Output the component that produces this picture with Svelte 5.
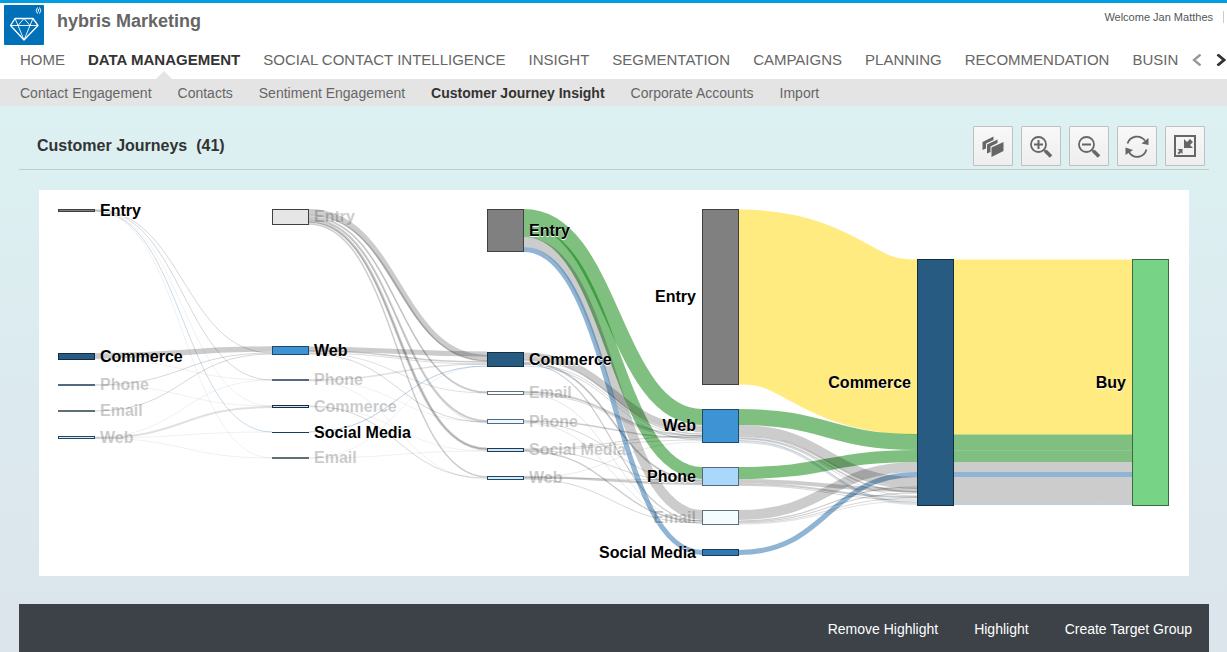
<script>
  const tabs = [
    'HOME', 'DATA MANAGEMENT', 'SOCIAL CONTACT INTELLIGENCE', 'INSIGHT', 'SEGMENTATION',
    'CAMPAIGNS', 'PLANNING', 'RECOMMENDATION', 'BUSIN'
  ];
  const activeTab = 'DATA MANAGEMENT';

  const views = [
    'Contact Engagement', 'Contacts', 'Sentiment Engagement', 'Customer Journey Insight',
    'Corporate Accounts', 'Import'
  ];
  const activeView = 'Customer Journey Insight';

  const footerActions = ['Remove Highlight', 'Highlight', 'Create Target Group'];

  const nodeWidth = 37;
  const columns = [19, 233, 448, 663, 878, 1093];

  // [column, top, height, label, fill, stroke, dimmed]
  const nodes = [
    [0, 19, 3, 'Entry', '#808080', '#404040', false],
    [0, 163, 7, 'Commerce', '#275b82', '#142e41', false],
    [0, 194, 2, 'Phone', '#52697f', '#52697f', true],
    [0, 220, 2, 'Email', '#5f7077', '#5f7077', true],
    [0, 246, 3, 'Web', '#d8e9f6', '#1e4969', true],
    [1, 19, 16, 'Entry', '#e6e6e6', '#404040', true],
    [1, 156, 9, 'Web', '#3d93d3', '#1e4969', false],
    [1, 189, 2, 'Phone', '#52697f', '#52697f', true],
    [1, 215, 3, 'Commerce', '#d4dee6', '#142e51', true],
    [1, 242, 1, 'Social Media', '#183c59', '#183c59', false],
    [1, 267, 2, 'Email', '#5f7077', '#5f7077', true],
    [2, 19, 43, 'Entry', '#808080', '#404040', false],
    [2, 162, 15, 'Commerce', '#275b82', '#142e41', false],
    [2, 201, 4, 'Email', '#fcfeff', '#5f7077', true],
    [2, 229, 5, 'Phone', '#eef7ff', '#52697f', true],
    [2, 258, 4, 'Social Media', '#d6e4ef', '#183c59', true],
    [2, 286, 4, 'Web', '#d8e9f6', '#1e4969', true],
    [3, 19, 176, 'Entry', '#808080', '#404040', false],
    [3, 219, 34, 'Web', '#3d93d3', '#1e4969', false],
    [3, 277, 19, 'Phone', '#a9d8fb', '#52697f', false],
    [3, 320, 15, 'Email', '#f4fcff', '#5f7077', true],
    [3, 359, 7, 'Social Media', '#3079b3', '#183c59', false],
    [4, 69, 247, 'Commerce', '#275b82', '#142e41', false],
    [5, 69, 247, 'Buy', '#77d487', '#3b6a43', false]
  ].map(([column, y, height, label, fill, stroke, dim]) => ({
    x: columns[column], y, height, label, fill, stroke, dim, before: column > 2
  }));

  const inks = {
    grey: ['#000', 0.2],
    faint: ['#000', 0.12],
    green: ['#008000', 0.5],
    blue: ['#2269a9', 0.5],
    paleblue: ['#2269a9', 0.3],
    gold: ['#ffd700', 0.5]
  };

  // [source column, source y, target y, thickness, ink]
  const links = [
    [0, 20, 163, 0.8, 'grey'], [0, 20, 190, 0.8, 'grey'], [0, 21, 216, 0.5, 'faint'],
    [0, 21, 242, 0.8, 'paleblue'], [0, 21, 268, 0.5, 'faint'],
    [0, 166, 159, 5.5, 'grey'], [0, 169, 190, 0.5, 'faint'],
    [0, 195, 163, 0.8, 'grey'], [0, 195, 216, 0.5, 'faint'],
    [0, 221, 164, 0.8, 'grey'],
    [0, 247, 190, 0.5, 'faint'], [0, 248, 217, 2, 'faint'],
    [0, 248, 242, 0.5, 'faint'], [0, 248, 268, 0.5, 'faint'],

    [1, 22, 168, 6, 'grey'], [1, 25.5, 171, 1.5, 'grey'],
    [1, 27, 202, 1.5, 'grey'], [1, 28, 203, 0.5, 'grey'],
    [1, 29, 231, 2, 'grey'], [1, 30, 233, 0.5, 'grey'],
    [1, 31.5, 259, 3, 'grey'], [1, 32, 259, 1, 'grey'],
    [1, 34, 287, 1.5, 'grey'],
    [1, 159, 164, 5, 'grey'], [1, 161, 172, 1.5, 'grey'], [1, 163, 174, 0.7, 'grey'],
    [1, 163, 203, 1, 'faint'], [1, 164, 232, 0.8, 'grey'],
    [1, 190, 174, 1.5, 'faint'], [1, 190, 232, 0.5, 'faint'], [1, 191, 289, 0.5, 'faint'],
    [1, 216, 288, 0.8, 'grey'], [1, 217, 261, 0.5, 'faint'],
    [1, 242, 176, 1, 'paleblue'],
    [1, 268, 176, 0.5, 'faint'], [1, 268, 261, 0.5, 'faint'],

    [2, 27, 227, 16, 'green'], [2, 41, 283, 12, 'green'],
    [2, 52, 325, 10, 'grey'], [2, 59.5, 362.5, 5, 'blue'],
    [2, 166, 239, 7, 'grey'], [2, 170, 244, 1.5, 'grey'], [2, 173, 291, 1.5, 'grey'],
    [2, 174, 331, 1.2, 'grey'], [2, 174, 246, 0.8, 'grey'], [2, 176, 250, 0.8, 'paleblue'],
    [2, 172, 290, 0.8, 'grey'],
    [2, 202, 246, 2, 'grey'], [2, 204, 248, 0.8, 'grey'], [2, 204, 333, 0.5, 'grey'],
    [2, 231, 248, 1.5, 'grey'], [2, 232, 292, 0.8, 'grey'], [2, 233, 333, 0.5, 'grey'],
    [2, 259, 246, 0.8, 'grey'], [2, 260, 293, 0.8, 'grey'], [2, 261, 331, 1.5, 'grey'],
    [2, 260, 250, 0.7, 'grey'],
    [2, 287, 294, 2.5, 'grey'], [2, 288, 252, 0.7, 'faint'], [2, 289, 333, 0.8, 'grey'],
    [2, 288, 290, 1, 'faint'],

    [3, 107, 157, 175, 'gold'],
    [3, 227, 252, 16, 'green'], [3, 283, 266, 12, 'green'],
    [3, 325, 277, 10, 'grey'], [3, 362.5, 284.5, 5, 'blue'],
    [3, 240, 292, 10, 'grey'], [3, 246, 298, 2, 'grey'], [3, 248, 302, 1.5, 'grey'],
    [3, 250.5, 312.5, 1, 'paleblue'], [3, 252, 314, 2, 'faint'], [3, 249, 306, 0.8, 'grey'],
    [3, 291, 300, 4, 'grey'], [3, 294, 307, 2, 'grey'], [3, 295.5, 310, 0.8, 'grey'],
    [3, 331, 297, 1.2, 'grey'], [3, 332, 303, 1, 'grey'],
    [3, 333, 308, 0.8, 'grey'], [3, 334, 311, 0.6, 'grey'],

    [4, 157, 157, 175, 'gold'],
    [4, 252.5, 252.5, 16, 'green'], [4, 266.25, 266.25, 11.5, 'green'],
    [4, 277, 277, 10, 'grey'], [4, 284.5, 284.5, 5, 'blue'],
    [4, 297.5, 297.5, 21, 'grey'], [4, 310, 310, 4, 'grey'],
    [4, 312.5, 312.5, 1, 'paleblue'], [4, 314, 314, 2, 'grey']
  ].map(([column, y0, y1, thickness, ink]) => {
    const x0 = columns[column] + nodeWidth;
    const x1 = columns[column + 1];
    const mid = (x0 + x1) / 2;
    return {
      d: `M${x0},${y0}C${mid},${y0} ${mid},${y1} ${x1},${y1}`,
      thickness,
      color: inks[ink][0],
      opacity: inks[ink][1]
    };
  });
</script>

<div class="page">
  <header>
    <div class="brand">
      <svg class="logo" viewBox="0 0 40 40" aria-hidden="true">
        <rect width="40" height="40" rx="1" fill="#0070b9" />
        <g fill="none" stroke="#fff" stroke-width="1.3" stroke-linejoin="round">
          <path d="M11 13.5H29L34 20.5L20 35L6.5 20.5Z" />
          <path d="M6.5 20.5H34M14 20.5L20 35L26 20.5M11 13.5L14 20.5L20 13.5L26 20.5L29 13.5" stroke-width="0.9" />
          <path d="M33.5 2.5Q31 5.500 33.5 8.5" stroke-width="1" />
          <path d="M35.500 2.500Q38 5.500 35.500 8.500" stroke-width="1" />
          <path d="M34.500 4V6.500" stroke-width="1" />
        </g>
      </svg>
      <h1>hybris Marketing</h1>
      <span class="welcome">Welcome Jan Matthes</span>
    </div>
    <div class="tabbar">
      <nav class="tabs" aria-label="Areas">
        {#each tabs as tab}
          <a href="#area" class:active={tab === activeTab}>{tab}</a>
        {/each}
      </nav>
      <button class="scroll" disabled aria-label="Scroll left">
        <svg width="10" height="12" viewBox="0 0 10 12"><path d="M8.5 0.5L2 6L8.5 11.5" fill="none" stroke="#999" stroke-width="2.4" /></svg>
      </button>
      <button class="scroll" aria-label="Scroll right">
        <svg width="10" height="12" viewBox="0 0 10 12"><path d="M1.5 0.5L8 6L1.5 11.5" fill="none" stroke="#333" stroke-width="2.8" /></svg>
      </button>
    </div>
  </header>

  <nav class="views" aria-label="Views">
    {#each views as view}
      <a href="#view" class:active={view === activeView}>{view}</a>
    {/each}
  </nav>

  <main>
    <div class="heading">
      <h2>Customer Journeys&nbsp; (41)</h2>
      <div class="tools">
        <button aria-label="Layers">
          <svg viewBox="0 0 24 24" fill="#666">
            <path d="M1.5 8L12.5 2.5V6L5 9.500V14.500L1.5 16Z" />
            <path d="M6 10.5L16.5 5.5V9L9.5 12.5V18L6 19.5Z" />
            <path d="M10.5 13.5L22.500 8V17L10.500 23Z" />
          </svg>
        </button>
        <button aria-label="Zoom in">
          <svg viewBox="0 0 24 24" fill="none" stroke="#666">
            <circle cx="9.500" cy="10.500" r="7.500" stroke-width="1.8" />
            <path d="M5 10.500H14M9.500 6V15" stroke-width="2" />
            <path d="M15 16L17 18" stroke-width="2" />
            <path d="M16.500 17L22 22.500" stroke-width="3.6" />
          </svg>
        </button>
        <button aria-label="Zoom out">
          <svg viewBox="0 0 24 24" fill="none" stroke="#666">
            <circle cx="9.500" cy="10.500" r="7.500" stroke-width="1.8" />
            <path d="M5 10.500H14" stroke-width="2" />
            <path d="M15 16L17 18" stroke-width="2" />
            <path d="M16.500 17L22 22.500" stroke-width="3.6" />
          </svg>
        </button>
        <button aria-label="Refresh">
          <svg viewBox="0 0 24 24">
            <path d="M2.500 9.500C5 2 14.500 0 20 6.500M21.500 15.500C19 24 8.500 25.500 4 18" fill="none" stroke="#666" stroke-width="1.8" />
            <path d="M23.500 4V11L16.500 9.500ZM0.500 13.500L8 16L0.500 21Z" fill="#666" />
          </svg>
        </button>
        <button aria-label="Exit full screen">
          <svg viewBox="0 0 24 24">
            <rect x="2" y="2" width="20" height="20" fill="none" stroke="#666" stroke-width="2" />
            <path d="M11 5V14H20L17 11L20 8L17 5L14 8ZM4.500 15H9.500V20L8 18.500L6 20.500L4.500 19L6.500 17Z" fill="#666" />
          </svg>
        </button>
      </div>
    </div>

    <svg class="chart" viewBox="0 0 1150 386" role="img" aria-label="Customer journeys">
      <g fill="none">
        {#each links as link}
          <path d={link.d} stroke={link.color} stroke-opacity={link.opacity} stroke-width={link.thickness} />
        {/each}
      </g>
      {#each nodes as node}
        <rect x={node.x} y={node.y} width={nodeWidth} height={node.height} fill={node.stroke} />
        {#if node.height > 2}
          <rect x={node.x + 1} y={node.y + 1} width={nodeWidth - 2} height={node.height - 2} fill={node.fill} />
        {/if}
      {/each}
      {#each nodes as node}
        <text
          class:dim={node.dim}
          x={node.before ? node.x - 6 : node.x + nodeWidth + 5}
          y={Math.round(node.y + node.height / 2 + 5)}
          text-anchor={node.before ? 'end' : 'start'}>{node.label}</text>
      {/each}
    </svg>

    <footer>
      {#each footerActions as action}
        <button>{action}</button>
      {/each}
    </footer>
  </main>
</div>

<style>
  :global(body) {
    margin: 0;
    font-family: "Liberation Sans", Arial, sans-serif;
  }

  .page {
    display: flex;
    flex-direction: column;
    min-height: 100vh;
    box-sizing: border-box;
    background: linear-gradient(#dcf1f2 106px, #dce4ec);
  }

  button {
    padding: 0;
    border: 0;
    background: none;
    font: inherit;
    cursor: pointer;
  }

  a {
    color: inherit;
    text-decoration: none;
  }

  header {
    border-top: 3px solid #009de0;
    background: #fff;
  }

  .brand {
    display: flex;
    align-items: flex-start;
    gap: 13px;
    height: 42px;
    padding: 2px 3px 0 4px;
    box-sizing: border-box;
  }

  .logo {
    flex: none;
    width: 40px;
    height: 40px;
  }

  h1 {
    flex: 1;
    margin: 5px 0 0;
    color: #666;
    font-size: 18px;
    line-height: 22px;
  }

  .welcome {
    margin-top: 6px;
    padding-right: 10px;
    border-right: 1px solid #ccc;
    color: #555;
    font-size: 11px;
    line-height: 12px;
  }

  .tabbar {
    display: flex;
    height: 34px;
    padding-right: 1px;
    align-items: stretch;
  }

  .tabs {
    display: flex;
    flex: 1;
    gap: 23px;
    min-width: 0;
    margin-right: 10px;
    padding-left: 20px;
    overflow: hidden;
    color: #666;
    font-size: 15px;
    line-height: 30px;
    white-space: nowrap;
  }

  .tabs a {
    position: relative;
  }

  .tabs .active {
    color: #333;
    font-weight: bold;
  }

  .tabs .active::after {
    content: "";
    position: absolute;
    bottom: 0;
    left: 50%;
    margin-left: -8px;
    border: 8px solid transparent;
    border-top: 0;
    border-bottom-color: #e4e4e4;
  }

  .scroll {
    display: flex;
    width: 10px;
    height: 30px;
    align-items: center;
  }

  .scroll + .scroll {
    margin-left: 14px;
  }

  .views {
    display: flex;
    gap: 26px;
    padding: 2px 20px 0;
    overflow: hidden;
    background: #e4e4e4;
    color: #666;
    font-size: 14px;
    line-height: 25px;
    white-space: nowrap;
  }

  .views .active {
    color: #333;
    font-weight: bold;
  }

  main {
    display: flex;
    flex: 1;
    flex-direction: column;
    padding: 16px 18px 0 19px;
  }

  .heading {
    display: flex;
    align-items: center;
    justify-content: space-between;
    padding: 4px 4px 3px 18px;
    border-bottom: 1px solid #bfcdcc;
  }

  h2 {
    margin: 0;
    color: #333;
    font-size: 16px;
    line-height: 20px;
  }

  .tools {
    display: flex;
    gap: 8px;
  }

  .tools button {
    display: flex;
    width: 40px;
    height: 40px;
    align-items: center;
    justify-content: center;
    border: 1px solid #bfbfbf;
    border-radius: 1px;
    background: linear-gradient(#f8f8f8, #eee);
  }

  .tools svg {
    width: 24px;
    height: 24px;
  }

  .chart {
    display: block;
    margin: 20px 20px 28px;
    background: #fff;
  }

  .chart text {
    fill: #000;
    font-size: 16px;
    font-weight: bold;
    text-shadow: 0 1px 0 #fff;
  }

  .chart .dim {
    opacity: 0.2;
  }

  footer {
    display: flex;
    justify-content: flex-end;
    gap: 36px;
    margin-top: auto;
    padding: 2px 17px 0;
    background: #3c4248;
    color: #fff;
  }

  footer button {
    color: inherit;
    font-size: 14px;
    line-height: 46px;
  }
</style>
